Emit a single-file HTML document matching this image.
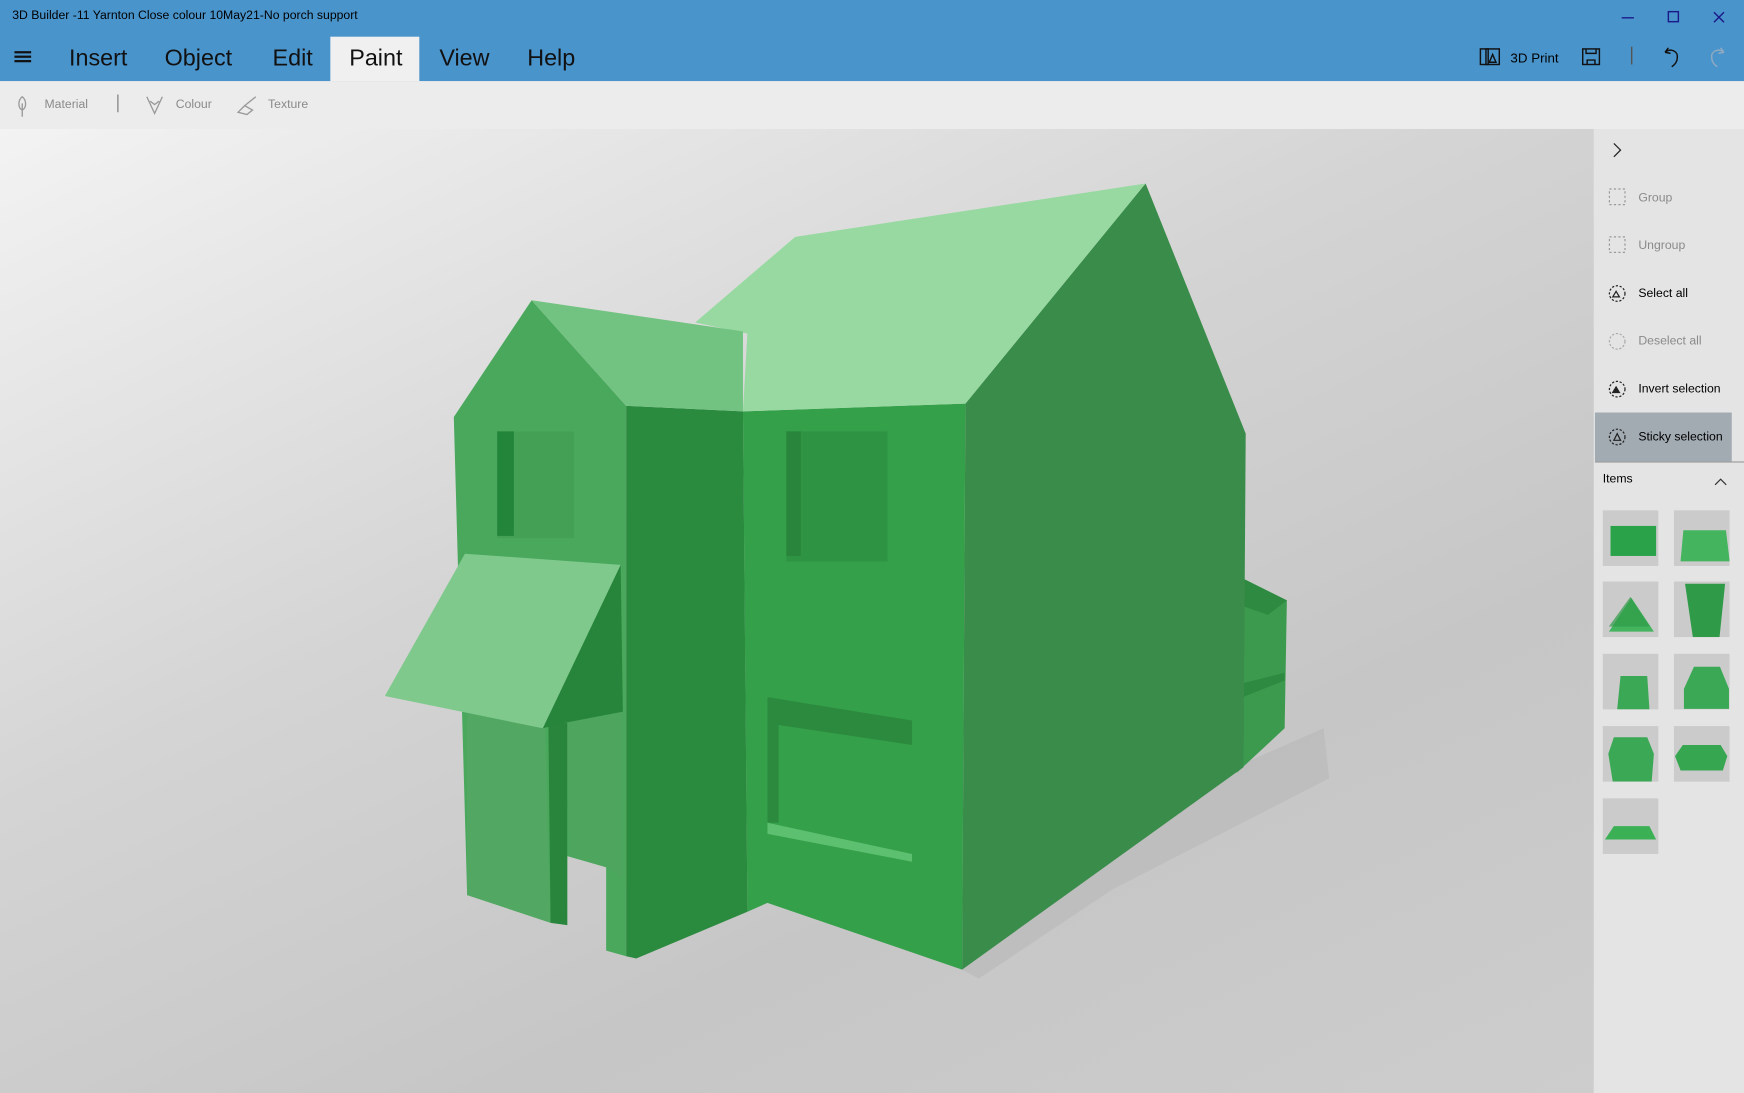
<!DOCTYPE html>
<html><head><meta charset="utf-8"><style>
html,body{margin:0;padding:0;width:1744px;height:1093px;overflow:hidden;background:#e6e6e6}
#s{position:absolute;left:0;top:0;width:1568px;height:983px;transform:scale(1.11224,1.11190);transform-origin:0 0;font-family:"Segoe UI","Liberation Sans",sans-serif;color:#000}
.a{position:absolute}
.menu{position:absolute;top:41px;font-size:21px;color:#111;font-weight:300}
.pt{position:absolute;font-size:11px;color:#000}
.dis{color:#8a8a8a}
.th{position:absolute;width:50px;height:50px;background:#cbcbcb}
</style></head><body><div id="s">
<div class="a" style="left:0;top:0;width:1568px;height:73px;background:#4a94cc"></div>
<div class="a" style="left:11px;top:8px;font-size:11px">3D Builder -11 Yarnton Close colour 10May21-No porch support</div>
<div class="a" style="left:297px;top:33px;width:80px;height:40px;background:#f0f0f0"></div>
<div class="a" style="left:13px;top:46px;width:15px;height:1.5px;background:#111;box-shadow:0 4px 0 #111,0 8px 0 #111"></div>
<div class="menu" style="left:62px">Insert</div>
<div class="menu" style="left:148px">Object</div>
<div class="menu" style="left:245px">Edit</div>
<div class="menu" style="left:314px">Paint</div>
<div class="menu" style="left:395px">View</div>
<div class="menu" style="left:474px">Help</div>
<svg class="a" style="left:1300px;top:0" width="268" height="73" viewBox="1300 0 268 73" fill="none" stroke="#111" stroke-width="1.3">
<path d="M1458 16h11" stroke="#1a1a8a"/><rect x="1500" y="10.5" width="9" height="9" stroke="#1a1a8a"/><path d="M1541 11l9 9M1550 11l-9 9" stroke="#1a1a8a"/>
<rect x="1331" y="44" width="7" height="14"/><rect x="1336" y="44" width="12" height="14"/><path d="M1339 56l3-7 3 7z"/>
<rect x="1423" y="44" width="15" height="14"/><path d="M1426 44v4h9v-4M1427 58v-4h7v4"/>
<path d="M1467 42v16" stroke="#555"/>
<path d="M1497 47l3-4M1497 47l5 1M1497 47c5-4 12-1 11 5c0 3-2 6-5 8"/>
<path d="M1550 47l-3-4M1550 47l-5 1M1550 47c-5-4-12-1-11 5c0 3 2 6 5 8" stroke="#8fa9c0"/>
</svg>
<div class="a" style="left:1358px;top:45px;font-size:12px">3D Print</div>
<div class="a" style="left:0;top:73px;width:1568px;height:43px;background:#ececec"></div>
<svg class="a" style="left:0;top:73px" width="300" height="43" fill="none" stroke="#999" stroke-width="1.2">
<path d="M20 14c-4 3-4 10 0 12c4-2 4-9 0-12zM20 20v12"/><path d="M106 12v16" stroke="#888"/>
<path d="M132 14l7 15l7-15M135 18l4 3l4-3"/><path d="M214 28l6-6l7 4l-5 4zM220 22l10-8"/>
</svg>
<div class="a dis" style="left:40px;top:88px;font-size:11px">Material</div>
<div class="a dis" style="left:158px;top:88px;font-size:11px">Colour</div>
<div class="a dis" style="left:241px;top:88px;font-size:11px">Texture</div>
<div class="a" style="left:0;top:116px;width:1433px;height:867px;background:linear-gradient(155deg,#f3f3f3 0%,#d4d4d4 40%,#c6c6c6 70%,#cdcdcd 100%)"></div>
<svg class="a" style="left:0;top:116px" width="1433" height="867" viewBox="0 116 1433 867">
<path d="M865 872L1110 690L1190 655L1195 700L1000 800L880 880Z" fill="#b7b7b7" opacity=".6"/>
<path d="M1117 520L1157 540L1155 655L1112 695L1110 530Z" fill="#3c9a4e"/>
<path d="M1117 520L1157 540L1140 553L1117 545Z" fill="#2e8a40"/>
<path d="M1115 615L1155 605L1155 612L1115 628Z" fill="#2e8a40"/>
<path d="M868 363L1030 165L1120 390L1118 690L865 872Z" fill="#3a8c4a"/>
<path d="M668 370L868 363L865 872L690 812L672 820L670 600Z" fill="#34a049"/>
<path d="M625 290L715 213L1030 165L868 363L668 370L672 300Z" fill="#98d9a2"/>
<path d="M707 388H798V505H707Z" fill="#2e9444"/><path d="M707 388H720V500H707Z" fill="#2a853c"/>
<path d="M690 627L820 648V670L700 652V740H690Z" fill="#2c8a3f"/>
<path d="M690 740L820 768V775L690 750Z" fill="#5cc070"/>
<path d="M408 375L478 270L563 365L563 860L545 855L545 780L510 770L510 832L420 805Z" fill="#4aa85c"/>
<path d="M563 365L668 370L672 820L572 862L563 860Z" fill="#2a8a3e"/>
<path d="M478 270L668 298L668 370L563 365Z" fill="#72c381"/>
<path d="M447 388H516V484H447Z" fill="#43a055"/><path d="M447 388H462V482H447Z" fill="#22853a"/>
<path d="M420 640L490 655L495 830L420 805Z" fill="#52a862"/>
<path d="M508 650L560 640L560 790L545 780L512 770Z" fill="#4ea55e"/>
<path d="M493 650L510 650L510 832L495 830Z" fill="#2a853c"/>
<path d="M488 655L558 508L560 640L508 650Z" fill="#27843b"/>
<path d="M346 626L418 498L558 508L488 655Z" fill="#80c98d"/>
</svg>
<div class="a" style="left:1433px;top:116px;width:135px;height:867px;background:#e4e4e4"></div>
<div class="a" style="left:1434px;top:371px;width:123px;height:44px;background:#a2aab2"></div>
<div class="a" style="left:1434px;top:415px;width:134px;height:1px;background:#999"></div>
<svg class="a" style="left:1433px;top:116px" width="135" height="330" viewBox="1433 116 135 330" fill="none" stroke-width="1.1">
<path d="M1451 129l6 6l-6 6" stroke="#222"/>
<rect x="1447" y="170" width="14" height="14" stroke="#999" stroke-dasharray="2 2"/>
<rect x="1447" y="213" width="14" height="14" stroke="#999" stroke-dasharray="2 2"/>
<circle cx="1454" cy="264" r="7" stroke="#222" stroke-dasharray="2 1.5"/><path d="M1450 267l3-5l3 5z" stroke="#222"/>
<circle cx="1454" cy="307" r="7" stroke="#aaa" stroke-dasharray="2 1.5"/>
<circle cx="1454" cy="350" r="7" stroke="#222" stroke-dasharray="2 1.5"/><path d="M1450 353l3-5l3 5z" fill="#222" stroke="#222"/>
<circle cx="1454" cy="393" r="7" stroke="#222" stroke-dasharray="2 1.5"/><path d="M1451 396l3-6l3 6z" stroke="#222"/>
<path d="M1542 436l5-5l5 5" stroke="#333"/>
</svg>
<div class="pt dis" style="left:1473px;top:172px">Group</div>
<div class="pt dis" style="left:1473px;top:215px">Ungroup</div>
<div class="pt" style="left:1473px;top:258px">Select all</div>
<div class="pt dis" style="left:1473px;top:301px">Deselect all</div>
<div class="pt" style="left:1473px;top:344px">Invert selection</div>
<div class="pt" style="left:1473px;top:387px">Sticky selection</div>
<div class="pt" style="left:1441px;top:425px">Items</div>
<div class="th" style="left:1441px;top:459px"><svg width="50" height="50"><rect x="7" y="14" width="41" height="27" fill="#2aa24a"/></svg></div>
<div class="th" style="left:1505px;top:459px"><svg width="50" height="50"><path d="M10 21h45l4 33H7z" transform="scale(.85)" fill="#45b45f"/></svg></div>
<div class="th" style="left:1441px;top:523px"><svg width="50" height="50"><path d="M6 49L28 16L50 49Z" transform="scale(.92)" fill="#45b45f"/><path d="M27 15L46 44H6Z" transform="scale(.92)" fill="#2f9a47" opacity=".7"/></svg></div>
<div class="th" style="left:1505px;top:523px"><svg width="50" height="50"><path d="M10 2h36l-5 48H17z" fill="#2f9a47"/></svg></div>
<div class="th" style="left:1441px;top:588px"><svg width="50" height="50"><path d="M16 20h24l2 30H13z" fill="#3aa854"/></svg></div>
<div class="th" style="left:1505px;top:588px"><svg width="50" height="50"><path d="M20 13h26l9 22v20H10V35z" transform="scale(.9)" fill="#3aa854"/></svg></div>
<div class="th" style="left:1441px;top:653px"><svg width="50" height="50"><path d="M10 10h30l6 15l-2 25H9L5 25z" fill="#3aa854"/></svg></div>
<div class="th" style="left:1505px;top:653px"><svg width="50" height="50"><path d="M8 17h34l6 10l-4 13H6L1 27z" fill="#36a650"/></svg></div>
<div class="th" style="left:1441px;top:718px"><svg width="50" height="50"><path d="M10 25h32l6 12H2z" fill="#3cb055"/></svg></div>
</div></body></html>
